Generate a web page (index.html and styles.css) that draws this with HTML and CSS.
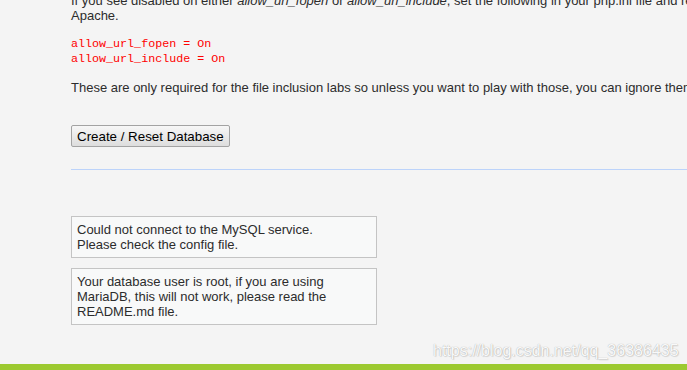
FILE: index.html
```html
<!DOCTYPE html>
<html lang="en">
<head>
    <meta charset="UTF-8">
    <meta name="viewport" content="width=device-width, initial-scale=1.0">
    <title>Setup :: Damn Vulnerable Web Application</title>
    <link rel="stylesheet" href="styles.css">
</head>
<body>
    <div class="page">
        <div class="main-body">
            <p class="intro">If you see disabled on either <i>allow_url_fopen</i> or <i>allow_url_include</i>, set the following in your php.ini file and restart Apache.</p>
<pre class="code">allow_url_fopen = On
allow_url_include = On</pre>
            <p class="note">These are only required for the file inclusion labs so unless you want to play with those, you can ignore them.</p>

            <form class="db-form" action="#" method="post">
                <input class="db-button" name="create_db" type="submit" value="Create / Reset Database">
            </form>

            <hr class="divider">

            <div class="warning">Could not connect to the MySQL service.<br>Please check the config file.</div>
            <div class="warning">Your database user is root, if you are using MariaDB, this will not work, please read the README.md file.</div>
        </div>
        <div class="footer-bar"></div>
    </div>
    <div class="watermark">https://blog.csdn.net/qq_36386435</div>
</body>
</html>
```

FILE: styles.css
```css
html, body {
    margin: 0;
    height: 100%;
    overflow: hidden;
}

body {
    background-color: #f4f4f4;
    color: #2c2c2c;
    font-family: "Liberation Sans", Arial, sans-serif;
    font-size: 13px;
    line-height: 15px;
}

.page {
    display: flex;
    flex-direction: column;
    height: 100%;
}

.main-body {
    width: 670px;
    padding-left: 71px;
}

/* page is scrolled a little, first line is cut off */
.intro {
    margin: -7px 0 0;
}

.code {
    margin: 14px 0 0;
    font-family: "Liberation Mono", "Courier New", monospace;
    font-size: 11.7px;
    line-height: 15px;
    color: #ff0000;
}

.note {
    margin: 13px 0 0;
}

.db-form {
    margin: 30px 0 0;
}

.db-button {
    height: 22px;
    padding: 0 5px;
    font-family: "Liberation Sans", Arial, sans-serif;
    font-size: 13.33px;
    color: #000;
    background: linear-gradient(#f7f7f7, #dddddd);
    border: 1px solid #a3a3a3;
    border-radius: 2px;
}

.divider {
    margin: 22px 0 46px;
    width: 680px;
    height: 1px;
    border: 0;
    background-color: #bcd3fa;
}

.warning {
    width: 294px;
    margin-bottom: 10px;
    padding: 5px;
    background-color: #f8f9f9;
    border: 1px solid #c4c4c4;
}

.footer-bar {
    margin-top: auto;
    height: 6px;
    background-color: #9cc930;
}

.watermark {
    position: absolute;
    left: 433px;
    top: 342px;
    font-size: 16px;
    line-height: 18px;
    color: rgba(255, 255, 255, 0.95);
    text-shadow: 0 0 1px rgba(0, 0, 0, 0.35), 1px 1px 1px rgba(0, 0, 0, 0.1);
}
```
